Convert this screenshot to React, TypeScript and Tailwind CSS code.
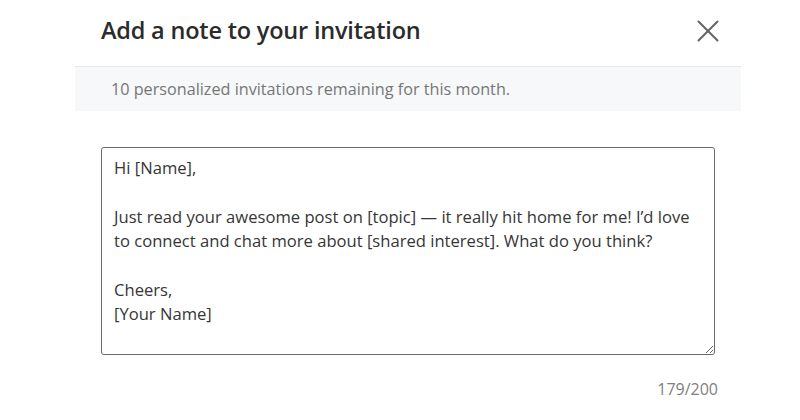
import React from 'react';
import { X } from 'lucide-react';

const note = `Hi [Name],

Just read your awesome post on [topic] — it really hit home for me! I’d love to connect and chat more about [shared interest]. What do you think?

Cheers,
[Your Name]`;

export default function App() {
  return (
    <div
      className="w-[800px] h-[420px] bg-white overflow-hidden"
      style={{ fontFamily: '"Open Sans", "Noto Sans", sans-serif' }}
    >
      <div className="flex items-center justify-between pl-[101px] pr-[73px] pt-[12px] h-[66px] pb-[16px]">
        <h2 className="text-[23.5px] font-semibold text-[#2b2b2b] tracking-[-0.2px]">Add a note to your invitation</h2>
        <button className="text-[#666]">
          <X size={38} strokeWidth={1.3} />
        </button>
      </div>

      <div className="mx-[75px] w-[666px] h-[45px] bg-[#f7f8fa] border-t border-[#e6e8eb] flex items-center pl-[36px]">
        <span className="text-[16.2px] text-[#767676]">10 personalized invitations remaining for this month.</span>
      </div>

      <div className="pl-[101px] pt-[36px]">
        <textarea
          readOnly
          defaultValue={note}
          className="block w-[614px] h-[208px] border-[1.5px] border-[#6b6b6b] rounded-[3px] pl-[12px] pr-[20px] py-[8px] text-[16.6px] leading-[24.4px] text-[#363636] outline-none"
          style={{ fontFamily: '"Open Sans", "Noto Sans", sans-serif' }}
        />
        <div className="w-[617px] text-right mt-[22px] text-[16px] text-[#808080]">179/200</div>
      </div>
    </div>
  );
}
